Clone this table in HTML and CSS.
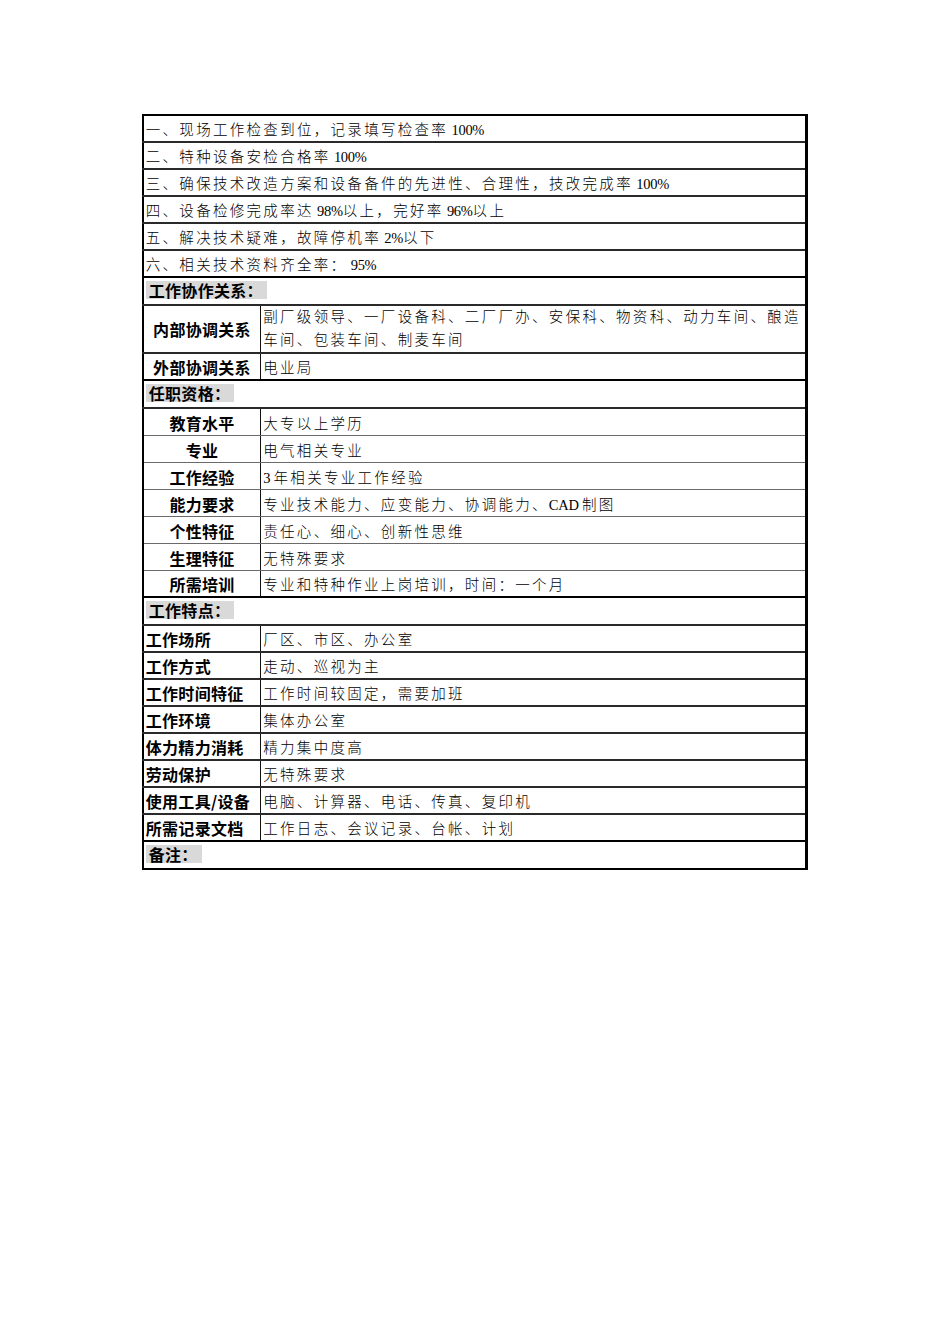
FILE: index.html
```html
<!DOCTYPE html>
<html lang="zh-CN">
<head>
<meta charset="utf-8">
<title>岗位说明书</title>
<link rel="stylesheet" href="styles.css">
</head>
<body>
<table class="sheet">
  <colgroup><col class="c-label"><col class="c-value"></colgroup>
  <tbody>
    <tr class="r"><td colspan="2" class="full">一、现场工作检查到位，记录填写检查率<span class="n"> 100%</span></td></tr>
    <tr class="r"><td colspan="2" class="full">二、特种设备安检合格率<span class="n"> 100%</span></td></tr>
    <tr class="r"><td colspan="2" class="full">三、确保技术改造方案和设备备件的先进性、合理性，技改完成率<span class="n"> 100%</span></td></tr>
    <tr class="r"><td colspan="2" class="full">四、设备检修完成率达<span class="n"> 98%</span>以上，完好率<span class="n"> 96%</span>以上</td></tr>
    <tr class="r"><td colspan="2" class="full">五、解决技术疑难，故障停机率<span class="n"> 2%</span>以下</td></tr>
    <tr class="r sec-end"><td colspan="2" class="full">六、相关技术资料齐全率：<span class="n"> 95%</span></td></tr>

    <tr class="r"><td colspan="2" class="head"><span class="tag">工作协作关系：</span></td></tr>
    <tr class="r2"><td class="lab center mid">内部协调关系</td><td class="val multi">副厂级领导、一厂设备科、二厂厂办、安保科、物资科、动力车间、酿造<br>车间、包装车间、制麦车间</td></tr>
    <tr class="r sec-end"><td class="lab center">外部协调关系</td><td class="val">电业局</td></tr>

    <tr class="r"><td colspan="2" class="head"><span class="tag">任职资格：</span></td></tr>
    <tr class="r thin"><td class="lab center">教育水平</td><td class="val">大专以上学历</td></tr>
    <tr class="r thin"><td class="lab center">专业</td><td class="val">电气相关专业</td></tr>
    <tr class="r thin"><td class="lab center">工作经验</td><td class="val"><span class="n">3 </span>年相关专业工作经验</td></tr>
    <tr class="r thin"><td class="lab center">能力要求</td><td class="val">专业技术能力、应变能力、协调能力、<span class="n">CAD </span>制图</td></tr>
    <tr class="r thin"><td class="lab center">个性特征</td><td class="val">责任心、细心、创新性思维</td></tr>
    <tr class="r thin"><td class="lab center">生理特征</td><td class="val">无特殊要求</td></tr>
    <tr class="r sec-end"><td class="lab center">所需培训</td><td class="val">专业和特种作业上岗培训，时间：一个月</td></tr>

    <tr class="r"><td colspan="2" class="head"><span class="tag">工作特点：</span></td></tr>
    <tr class="r"><td class="lab">工作场所</td><td class="val">厂区、市区、办公室</td></tr>
    <tr class="r"><td class="lab">工作方式</td><td class="val">走动、巡视为主</td></tr>
    <tr class="r"><td class="lab">工作时间特征</td><td class="val">工作时间较固定，需要加班</td></tr>
    <tr class="r"><td class="lab">工作环境</td><td class="val">集体办公室</td></tr>
    <tr class="r"><td class="lab">体力精力消耗</td><td class="val">精力集中度高</td></tr>
    <tr class="r"><td class="lab">劳动保护</td><td class="val">无特殊要求</td></tr>
    <tr class="r"><td class="lab">使用工具/设备</td><td class="val">电脑、计算器、电话、传真、复印机</td></tr>
    <tr class="r sec-end"><td class="lab">所需记录文档</td><td class="val">工作日志、会议记录、台帐、计划</td></tr>

    <tr class="r last"><td colspan="2" class="head"><span class="tag">备注：</span></td></tr>
  </tbody>
</table>
</body>
</html>
```

FILE: styles.css
```css
html, body {
  margin: 0;
  padding: 0;
  background: #ffffff;
}

body {
  width: 950px;
  min-height: 1344px;
}

.sheet {
  border-collapse: collapse;
  table-layout: fixed;
  width: 664px;
  margin: 114px auto 0;
  border: 2px solid #000;
  border-right-width: 3px;
  color: #111;
}

.c-label { width: 118px; }
.c-value { width: 546px; }

.sheet td {
  padding: 0 2px 2px 2px;
  vertical-align: bottom;
  border-bottom: 2px solid #2a2a2a;
  white-space: nowrap;
  overflow: hidden;
}

.r td { height: 23px; }
.r2 td { height: 46px; }
.thin td { height: 24px; }

.thin td { border-bottom: 1px solid #6a6a6a; }
.sec-end td { border-bottom: 2px solid #000; }
.last td { border-bottom: none; }

.full,
.val {
  font-family: "Liberation Serif", "Noto Sans CJK SC", serif;
  font-size: 14.5px;
  font-weight: 300;
  letter-spacing: 2.3px;
  line-height: 18px;
  color: #000;
}

.full { padding-left: 2px; }
.val { padding-left: 4px; }

.val.multi {
  line-height: 23px;
  padding-bottom: 0;
  vertical-align: middle;
}

.n {
  font-family: "Liberation Serif", serif;
  font-size: 14.5px;
  font-weight: 400;
  letter-spacing: -0.3px;
}

.lab {
  border-right: 1px solid #111;
  font-family: "Noto Sans CJK SC", sans-serif;
  font-weight: 700;
  font-size: 16px;
  line-height: 19px;
  letter-spacing: 0.3px;
  color: #000;
  padding-left: 3px;
  padding-bottom: 1px;
}

.lab.center { text-align: center; padding-left: 2px; }
.lab.mid { vertical-align: middle; padding-bottom: 0; }

.head {
  padding: 0 0 1px 0;
  font-family: "Noto Sans CJK SC", sans-serif;
  font-weight: 700;
  font-size: 16px;
  color: #000;
}

.tag {
  display: inline-block;
  background: #d9d9d9;
  line-height: 18px;
  padding: 0 4px 0 3px;
  letter-spacing: 0.3px;
}
```
